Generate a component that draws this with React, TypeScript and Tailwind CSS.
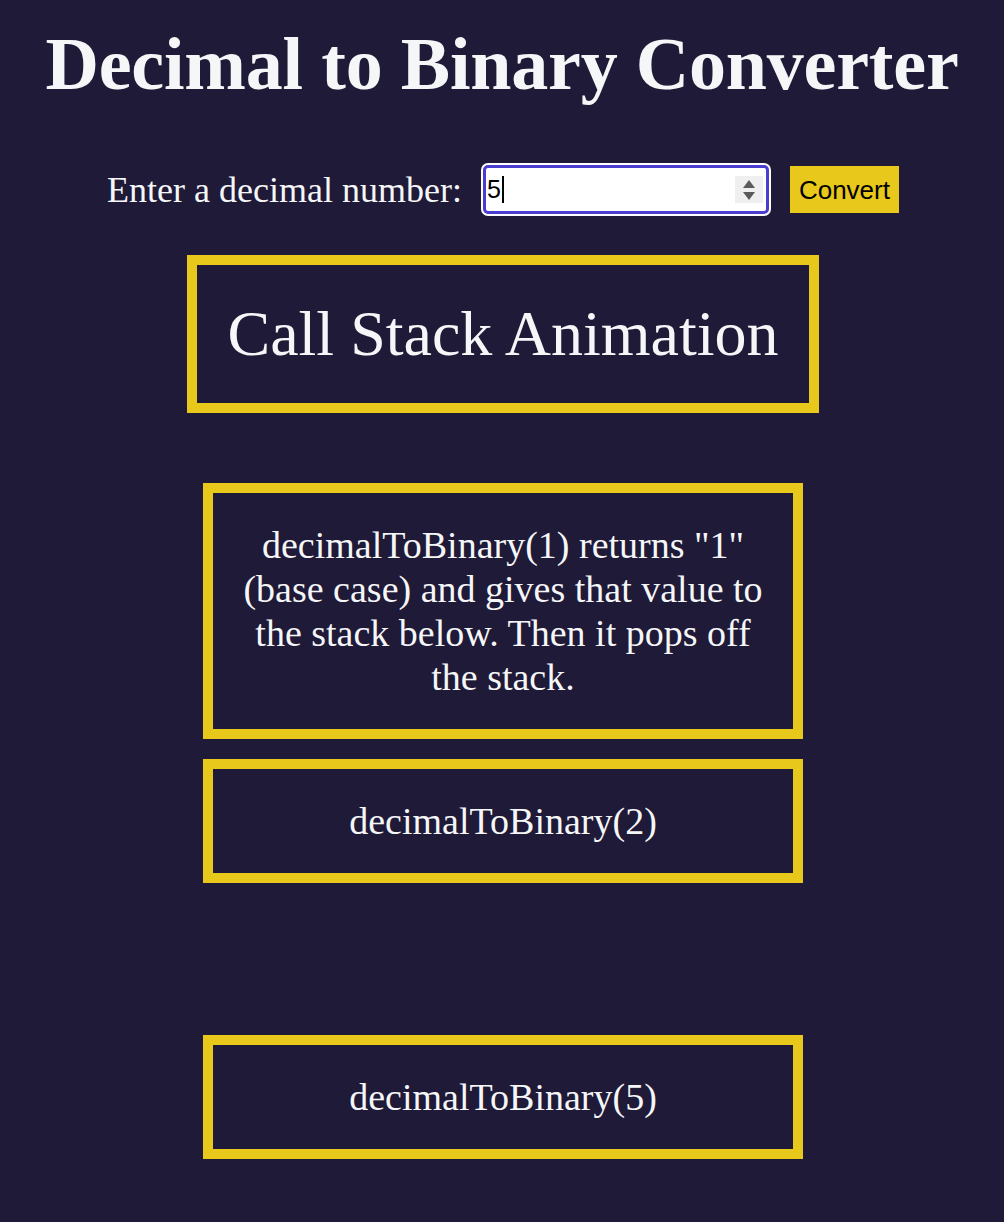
import React from "react";

const serif = { fontFamily: '"Liberation Serif", "Times New Roman", serif' };
const sans = { fontFamily: '"Liberation Sans", Arial, sans-serif' };

function StackBox({ children, className = "" }: { children: React.ReactNode; className?: string }) {
  return (
    <div
      className={
        "w-[600px] border-[10px] border-[#e8c81a] px-[24px] py-[30px] text-center text-[38px] leading-[44px] text-[#f5f6f7] " +
        className
      }
      style={serif}
    >
      {children}
    </div>
  );
}

export default function App() {
  return (
    <div className="min-h-screen w-full bg-[#1f1a37] flex flex-col items-center" style={serif}>
      <h1 className="mt-[27px] text-[74px] leading-[74px] font-bold text-[#f5f6f7] tracking-[-0.2px]">
        Decimal to Binary Converter
      </h1>

      <div className="mt-[62px] ml-[2px] flex items-center">
        <label className="text-[36px] leading-[40px] text-[#f5f6f7]">Enter a decimal number:</label>
        <div className="ml-[19px] h-[53px] w-[290px] rounded-[7px] bg-white p-[2px]">
          <div className="relative flex h-full w-full items-center rounded-[5px] border-[3px] border-[#4a3dd0] bg-white pl-[1px]">
            <span className="text-[25px] leading-none text-black" style={sans}>5</span>
            <span className="ml-[1px] h-[27px] w-[2px] bg-black" />
            <div className="absolute right-[3px] top-[8px] flex h-[27px] w-[28px] flex-col items-center justify-center gap-[4px] bg-[#efefef]">
              <svg width="12" height="8" viewBox="0 0 12 8"><path d="M6 0 L12 8 L0 8 Z" fill="#5a5a5a" /></svg>
              <svg width="12" height="8" viewBox="0 0 12 8"><path d="M0 0 L12 0 L6 8 Z" fill="#5a5a5a" /></svg>
            </div>
          </div>
        </div>
        <button
          className="ml-[19px] h-[47px] bg-[#e8c81a] px-[9px] text-[26px] leading-none text-black"
          style={sans}
        >
          Convert
        </button>
      </div>

      <div className="mt-[39px] ml-[2px] border-[10px] border-[#e8c81a] px-[30px] h-[158px] flex items-center">
        <h2 className="text-[64px] leading-none font-normal text-[#f5f6f7]">Call Stack Animation</h2>
      </div>

      <div className="mt-[70px] ml-[2px] flex flex-col items-center">
        <StackBox>
          decimalToBinary(1) returns "1" (base case) and gives that value to the stack below. Then it pops off the stack.
        </StackBox>
        <StackBox className="mt-[20px]">decimalToBinary(2)</StackBox>
        <StackBox className="mt-[152px]">decimalToBinary(5)</StackBox>
      </div>
    </div>
  );
}
